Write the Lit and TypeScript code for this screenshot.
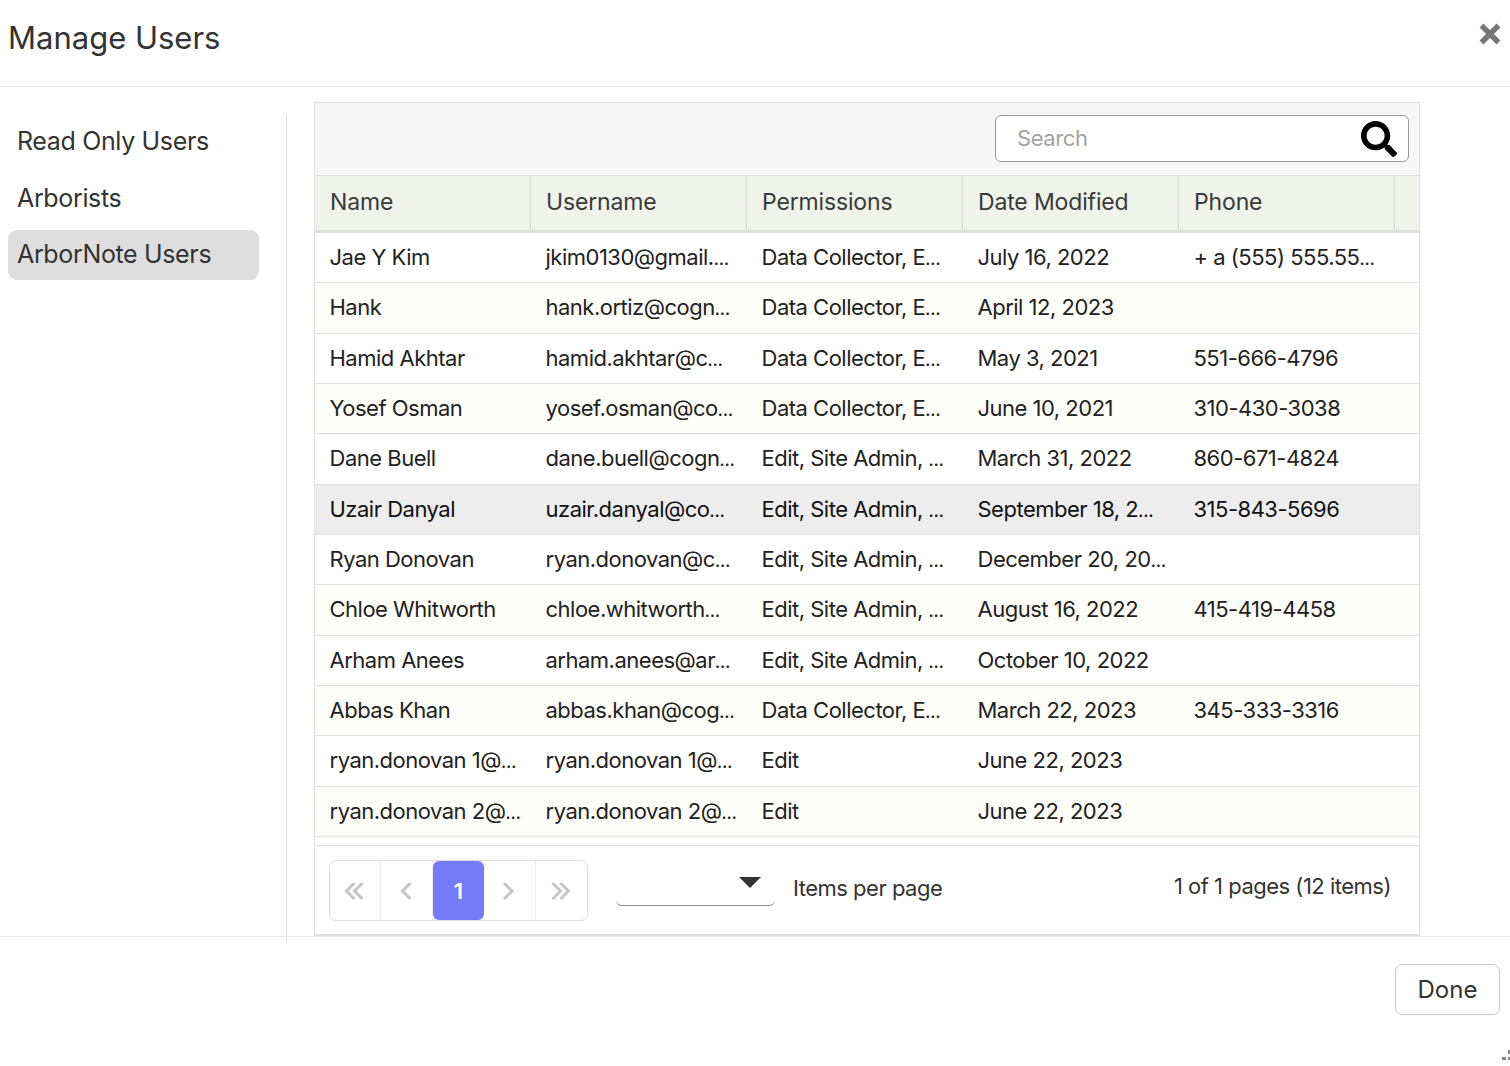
import { LitElement, css, html, svg } from 'lit'
import { customElement } from 'lit/decorators.js'

const rows = [
  ['Jae Y Kim', 'jkim0130@gmail.…', 'Data Collector, E…', 'July 16, 2022', '+ a (555) 555.55…'],
  ['Hank', 'hank.ortiz@cogn…', 'Data Collector, E…', 'April 12, 2023', ''],
  ['Hamid Akhtar', 'hamid.akhtar@c…', 'Data Collector, E…', 'May 3, 2021', '551-666-4796'],
  ['Yosef Osman', 'yosef.osman@co…', 'Data Collector, E…', 'June 10, 2021', '310-430-3038'],
  ['Dane Buell', 'dane.buell@cogn…', 'Edit, Site Admin, …', 'March 31, 2022', '860-671-4824'],
  ['Uzair Danyal', 'uzair.danyal@co…', 'Edit, Site Admin, …', 'September 18, 2…', '315-843-5696'],
  ['Ryan Donovan', 'ryan.donovan@c…', 'Edit, Site Admin, …', 'December 20, 20…', ''],
  ['Chloe Whitworth', 'chloe.whitworth…', 'Edit, Site Admin, …', 'August 16, 2022', '415-419-4458'],
  ['Arham Anees', 'arham.anees@ar…', 'Edit, Site Admin, …', 'October 10, 2022', ''],
  ['Abbas Khan', 'abbas.khan@cog…', 'Data Collector, E…', 'March 22, 2023', '345-333-3316'],
  ['ryan.donovan 1@…', 'ryan.donovan 1@…', 'Edit', 'June 22, 2023', ''],
  ['ryan.donovan 2@…', 'ryan.donovan 2@…', 'Edit', 'June 22, 2023', ''],
]

const columns = ['Name', 'Username', 'Permissions', 'Date Modified', 'Phone']

const chevron = (paths: string[]) => html`
  <svg width="22" height="22" viewBox="0 0 22 22" fill="none" stroke="#c6c6c6" stroke-width="3">
    ${paths.map((d) => svg`<path d=${d}></path>`)}
  </svg>
`

// the ellipsis dots are much tighter in the reference font
const cell = (text: string) =>
  text.endsWith('…') ? html`${text.slice(0, -1)}<span class="el">…</span>` : text

@customElement('app-root')
export class AppRoot extends LitElement {
  render() {
    return html`
      <header class="top">
        <h1>Manage Users</h1>
        <svg class="close" viewBox="0 0 22 22" fill="none" stroke="#777" stroke-width="5.4">
          <path d="M2.5 2.5l17 17M19.5 2.5l-17 17"></path>
        </svg>
      </header>

      <div class="body">
        <nav class="side">
          <a>Read Only Users</a>
          <a>Arborists</a>
          <a class="on">ArborNote Users</a>
        </nav>

        <section class="grid">
          <div class="toolbar">
            <div class="search">
              <span>Search</span>
              <svg viewBox="0 0 512 512" fill="#000">
                <path d="M505 442.7L405.3 343c-4.5-4.5-10.6-7-17-7H372c27.6-35.3 44-79.7 44-128C416 93.1 322.9 0 208 0S0 93.1 0 208s93.1 208 208 208c48.3 0 92.7-16.4 128-44v16.3c0 6.4 2.5 12.5 7 17l99.7 99.7c9.4 9.4 24.6 9.4 33.9 0l28.3-28.3c9.4-9.4 9.4-24.6.1-34zM208 336c-70.7 0-128-57.2-128-128 0-70.7 57.2-128 128-128 70.7 0 128 57.2 128 128 0 70.7-57.2 128-128 128z"></path>
              </svg>
            </div>
          </div>

          <div class="thead">
            ${columns.map((c) => html`<div class="th">${c}</div>`)}
          </div>

          <div class="tbody">
            ${rows.map(
              (r, i) => html`
                <div class="tr ${i % 2 ? 'alt' : ''} ${i === 5 ? 'sel' : ''}">
                  ${r.map((c) => html`<div class="td">${cell(c)}</div>`)}
                </div>
              `
            )}
          </div>

          <div class="pager">
            <div class="pages">
              <div class="pg">${chevron(['M10.5 3l-8 8 8 8', 'M18.5 3l-8 8 8 8'])}</div>
              <div class="pg">${chevron(['M14.5 3l-8 8 8 8'])}</div>
              <div class="pg cur">1</div>
              <div class="pg">${chevron(['M6 3l8 8-8 8'])}</div>
              <div class="pg">${chevron(['M2.5 3l8 8-8 8', 'M10.5 3l8 8-8 8'])}</div>
            </div>
            <div class="size"><i></i></div>
            <span class="per">Items per page</span>
            <span class="info">1 of 1 pages (12 items)</span>
          </div>
        </section>
      </div>

      <footer class="bottom">
        <button>Done</button>
      </footer>

      <svg class="grip" width="8" height="12" viewBox="0 0 8 12" fill="#888">
        <rect x="0" y="8" width="4" height="3"></rect>
        <rect x="6" y="8" width="2" height="3"></rect>
        <rect x="6" y="1" width="2" height="4"></rect>
      </svg>
    `
  }

  static styles = css`
    :host {
      display: flex;
      flex-direction: column;
      position: relative;
      width: 1510px;
      height: 1066px;
      overflow: hidden;
      background: #fff;
      color: #333;
      font-family: Inter, 'Liberation Sans', sans-serif;
    }

    .top {
      flex: none;
      height: 86px;
      display: flex;
      justify-content: space-between;
      border-bottom: 1px solid #e7e7e7;
    }

    h1 {
      margin: 17px 0 0 8px;
      font-size: 31px;
      line-height: 42px;
      font-weight: 400;
    }

    .close {
      width: 22px;
      height: 22px;
      margin: 23px 9px 0 0;
    }

    .body {
      flex: none;
      height: 849px;
      display: flex;
      align-items: flex-start;
    }

    .side {
      flex: none;
      box-sizing: border-box;
      width: 287px;
      height: 829px;
      margin-top: 27px;
      padding: 0 27px 0 8px;
      border-right: 1px solid #e0e0e0;
      display: flex;
      flex-direction: column;
    }

    .side a {
      height: 50px;
      margin-top: 3px;
      padding-left: 9px;
      border-radius: 9px;
      font-size: 25px;
      line-height: 48px;
      letter-spacing: -0.35px;
      color: #333;
    }

    .side a:nth-child(2) {
      margin-top: 7px;
    }

    .side a.on {
      margin-top: 6px;
      background: #dedede;
    }

    .grid {
      flex: none;
      box-sizing: border-box;
      width: 1106px;
      height: 834px;
      margin: 15px 0 0 27px;
      border: solid #e0e0e0;
      border-width: 1px 1px 2px 1px;
      display: flex;
      flex-direction: column;
    }

    .toolbar {
      flex: none;
      height: 73px;
      box-sizing: border-box;
      padding: 12px 10px 0 0;
      display: flex;
      justify-content: flex-end;
      background: #f7f7f7;
      border-bottom: 1px solid #e0e0e0;
    }

    .search {
      box-sizing: border-box;
      width: 414px;
      height: 47px;
      padding: 0 11px 0 21px;
      display: flex;
      align-items: center;
      justify-content: space-between;
      background: #fff;
      border: 1px solid #999;
      border-radius: 6px;
      font-size: 22px;
      letter-spacing: -0.4px;
      color: #a3a3a3;
    }

    .search span {
      margin-bottom: 2px;
    }

    .search svg {
      width: 36px;
      height: 36px;
    }

    .thead {
      flex: none;
      height: 57px;
      box-sizing: border-box;
      display: flex;
      background: #eff3ea;
      border-bottom: 3px solid #dedede;
    }

    .th {
      box-sizing: border-box;
      width: 216px;
      padding-left: 15px;
      border-right: 1px solid #dadada;
      font-size: 23px;
      line-height: 53px;
      letter-spacing: -0.15px;
      color: #3a3a3a;
    }

    .tbody {
      flex: none;
      height: 612px;
      border-bottom: 1px solid #e0e0e0;
    }

    .tr {
      box-sizing: border-box;
      height: 50.33px;
      display: flex;
      border-bottom: 1px solid #e0e0e0;
    }

    .tr.alt {
      background: #fdfef9;
    }

    .tr.sel {
      background: #ededed;
    }

    .td {
      box-sizing: border-box;
      width: 216px;
      padding-left: 14.5px;
      font-size: 22px;
      line-height: 49px;
      letter-spacing: -0.5px;
      white-space: nowrap;
      color: #222;
    }

    .td .el {
      font-size: 16px;
      font-weight: 600;
      letter-spacing: -0.5px;
    }

    .tr.sel .td {
      color: #111;
    }

    .pager {
      flex: 1;
      display: flex;
      align-items: flex-start;
      padding: 0 28px 0 14px;
    }

    .pages {
      flex: none;
      margin-top: 14px;
      width: 259px;
      height: 61px;
      box-sizing: border-box;
      display: flex;
      border: 1px solid #dedede;
      border-radius: 7px;
    }

    .pg {
      flex: none;
      box-sizing: border-box;
      width: 20%;
      display: flex;
      align-items: center;
      justify-content: center;
      border-right: 1px solid #efefef;
    }

    .pg:last-child {
      border-right: 0;
    }

    .pg.cur {
      background: #737bf8;
      border: 0;
      border-radius: 6px;
      color: #fff;
      font-size: 22px;
      font-weight: 600;
    }

    .size {
      flex: none;
      position: relative;
      box-sizing: border-box;
      width: 159px;
      height: 45px;
      margin: 15px 0 0 28px;
      border-bottom: 1px solid #888;
      border-radius: 0 0 6px 6px;
    }

    .size i {
      position: absolute;
      top: 16px;
      right: 14px;
      border: solid transparent;
      border-width: 11px 11px 0;
      border-top-color: #333;
    }

    .per {
      margin: 27px 0 0 18px;
      font-size: 22px;
      line-height: 30px;
      letter-spacing: -0.5px;
    }

    .info {
      margin: 25px 0 0 auto;
      font-size: 22px;
      line-height: 30px;
      letter-spacing: -0.5px;
    }

    .bottom {
      flex: 1;
      display: flex;
      justify-content: flex-end;
      align-items: flex-start;
      padding: 27px 10px 0 0;
      border-top: 1px solid #e7e7e7;
    }

    button {
      width: 105px;
      height: 51px;
      padding: 0;
      background: #fff;
      border: 1px solid #c8c8c8;
      border-radius: 7px;
      font: inherit;
      font-size: 24px;
      color: #333;
    }

    .grip {
      position: absolute;
      right: 0;
      bottom: 5px;
    }
  `
}

declare global {
  interface HTMLElementTagNameMap {
    'app-root': AppRoot
  }
}
